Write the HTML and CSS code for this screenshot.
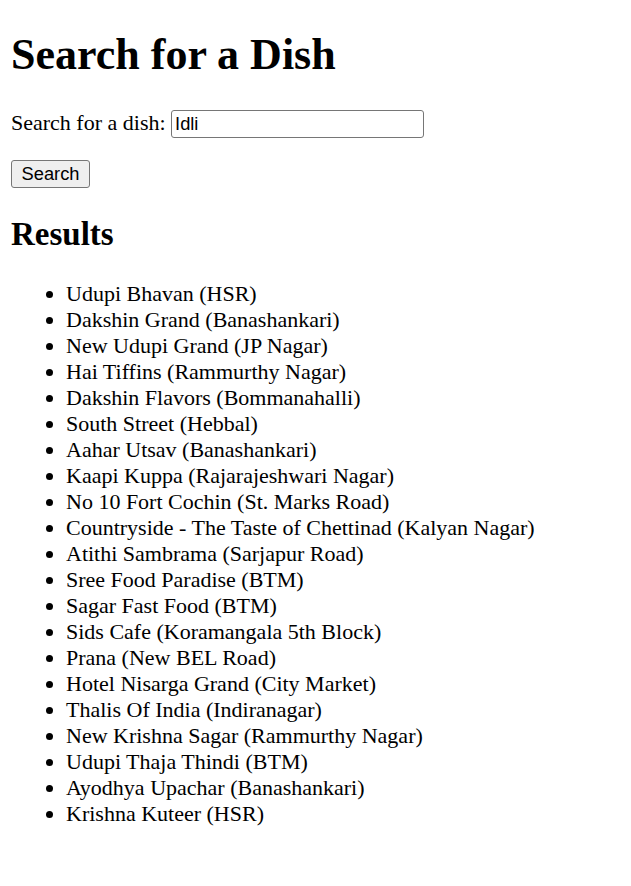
FILE: index.html
```html
<!DOCTYPE html>
<html>
<head>
<meta charset="utf-8">
<title>Search for a Dish</title>
<link rel="stylesheet" href="styles.css">
</head>
<body>
<h1 class="title">Search for a Dish</h1>
<form class="search-form">
  <p class="field">
    <label for="dish">Search for a dish:</label>
    <input id="dish" class="dish-input" type="text" value="Idli">
  </p>
  <p class="field">
    <button class="search-btn" type="button">Search</button>
  </p>
</form>
<h2 class="subtitle">Results</h2>
<ul class="results">
  <li>Udupi Bhavan (HSR)</li>
  <li>Dakshin Grand (Banashankari)</li>
  <li>New Udupi Grand (JP Nagar)</li>
  <li>Hai Tiffins (Rammurthy Nagar)</li>
  <li>Dakshin Flavors (Bommanahalli)</li>
  <li>South Street (Hebbal)</li>
  <li>Aahar Utsav (Banashankari)</li>
  <li>Kaapi Kuppa (Rajarajeshwari Nagar)</li>
  <li>No 10 Fort Cochin (St. Marks Road)</li>
  <li>Countryside - The Taste of Chettinad (Kalyan Nagar)</li>
  <li>Atithi Sambrama (Sarjapur Road)</li>
  <li>Sree Food Paradise (BTM)</li>
  <li>Sagar Fast Food (BTM)</li>
  <li>Sids Cafe (Koramangala 5th Block)</li>
  <li>Prana (New BEL Road)</li>
  <li>Hotel Nisarga Grand (City Market)</li>
  <li>Thalis Of India (Indiranagar)</li>
  <li>New Krishna Sagar (Rammurthy Nagar)</li>
  <li>Udupi Thaja Thindi (BTM)</li>
  <li>Ayodhya Upachar (Banashankari)</li>
  <li>Krishna Kuteer (HSR)</li>
</ul>
</body>
</html>
```

FILE: styles.css
```css
html {
  background: #fff;
}
body {
  margin: 11px;
  font-family: "Liberation Serif", "Times New Roman", serif;
  font-size: 22px;
  color: #000;
}
.title {
  font-size: 44px;
  font-weight: bold;
  margin: 18px 0 30px;
}
.search-form {
  margin: 0;
}
.field {
  margin: 22px 0;
}
.dish-input {
  font-family: "Liberation Sans", Arial, sans-serif;
  font-size: 18.3px;
  width: 253px;
  height: 28px;
  box-sizing: border-box;
  padding: 1px 3px;
  border: 1.4px solid #767676;
  border-radius: 3px;
  margin: 0;
  vertical-align: baseline;
}
.search-btn {
  font-family: "Liberation Sans", Arial, sans-serif;
  font-size: 18.3px;
  height: 28px;
  width: 79px;
  padding: 0 8px;
  background: #efefef;
  border: 1.4px solid #767676;
  border-radius: 3px;
  color: #000;
  margin: 0;
}
.subtitle {
  font-size: 33px;
  font-weight: bold;
  margin: 28px 0;
}
.results {
  margin: 22px 0;
  padding-left: 55px;
}
.results li {
  line-height: 26px;
}
```
